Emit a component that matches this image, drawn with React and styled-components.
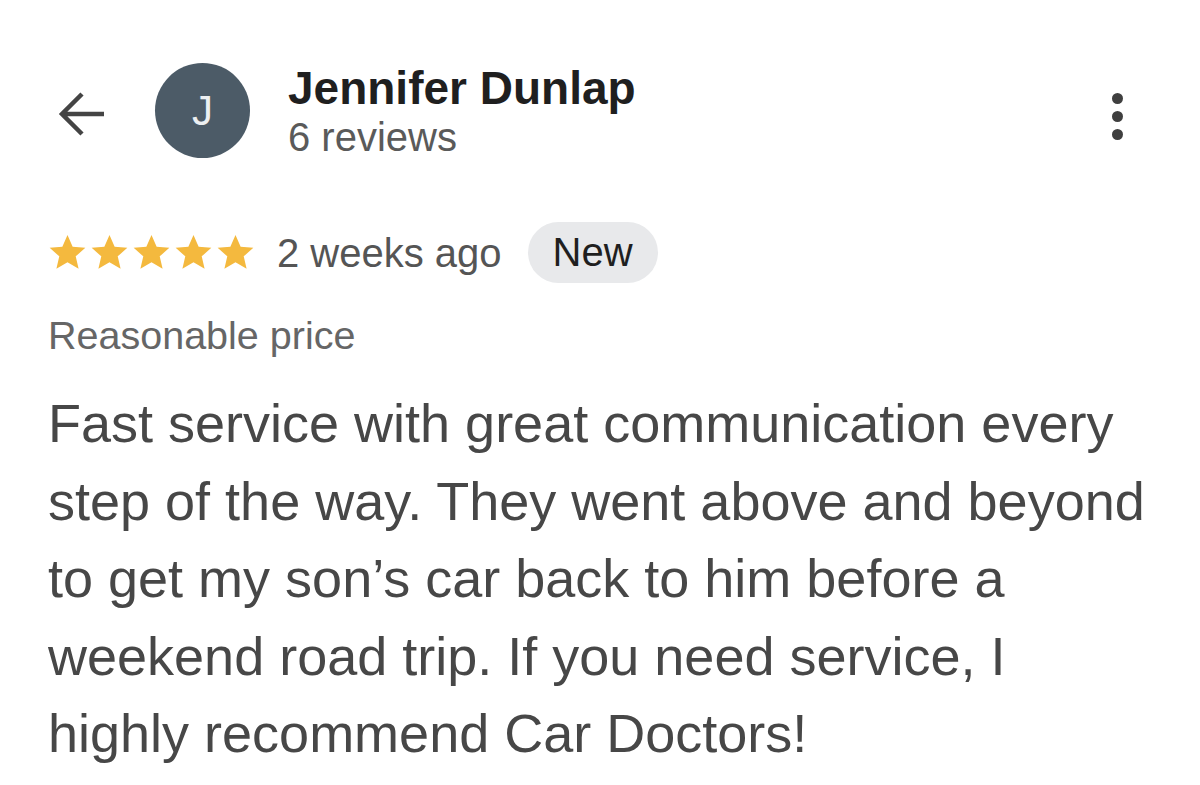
import React from 'react';
import styled, { createGlobalStyle } from 'styled-components';

const GlobalStyle = createGlobalStyle`
  html, body {
    margin: 0;
    padding: 0;
    background: #fff;
  }
  body {
    font-family: "Liberation Sans", Arial, Helvetica, sans-serif;
  }
`;

const Page = styled.div`
  width: 1200px;
  height: 785px;
  box-sizing: border-box;
  padding: 63px 0 0 48px;
  overflow: hidden;
  background: #fff;
`;

const Header = styled.div`
  display: flex;
  align-items: center;
  height: 95px;
  padding-right: 77px;
`;

const BackButton = styled.button`
  display: flex;
  align-items: center;
  justify-content: center;
  width: 60px;
  height: 60px;
  margin: 6px 43px 0 4px;
  padding: 0;
  border: none;
  background: none;
  color: #444;
`;

const Avatar = styled.div`
  width: 95px;
  height: 95px;
  flex-shrink: 0;
  border-radius: 50%;
  background: #4c5b67;
  color: #eceff1;
  display: flex;
  align-items: center;
  justify-content: center;
  font-size: 42px;
  margin-right: 38px;
`;

const Who = styled.div`
  display: flex;
  flex-direction: column;
  flex: 1;
`;

const Name = styled.div`
  font-size: 46px;
  line-height: 52px;
  font-weight: 700;
  color: #1f1f1f;
`;

const Sub = styled.div`
  font-size: 40px;
  line-height: 46px;
  color: #5a5a5a;
`;

const MoreButton = styled.button`
  display: flex;
  flex-direction: column;
  align-items: center;
  gap: 7px;
  padding: 0;
  border: none;
  background: none;
  margin-top: 12px;
`;

const Dot = styled.span`
  width: 11px;
  height: 11px;
  border-radius: 50%;
  background: #3f3f3f;
`;

const MetaRow = styled.div`
  display: flex;
  align-items: center;
  height: 61px;
  margin-top: 64px;
`;

const Stars = styled.div`
  display: flex;
  gap: 3px;
  margin-right: 22px;
`;

const Meta = styled.span`
  font-size: 40px;
  line-height: 40px;
  color: #555;
`;

const Pill = styled.span`
  margin-left: 26px;
  height: 61px;
  padding: 0 25px;
  border-radius: 31px;
  background: #e8e9eb;
  color: #1f1f1f;
  font-size: 40px;
  display: flex;
  align-items: center;
`;

const Tag = styled.div`
  margin-top: 29px;
  font-size: 39.5px;
  line-height: 46px;
  color: #666;
`;

const Body = styled.p`
  margin: 27px 0 0;
  width: 1110px;
  font-size: 54px;
  line-height: 77.5px;
  color: #474747;
`;

const Star = () => (
  <svg width="39" height="37" viewBox="0 0 24 23">
    <path
      d="M12 0.6l3.2 7.3 7.9 0.7-6 5.3 1.8 7.7L12 17.6l-6.9 4 1.8-7.7-6-5.3 7.9-0.7z"
      fill="#f4b93e"
    />
  </svg>
);

const App = () => {
  return (
    <>
      <GlobalStyle />
      <Page>
        <Header>
          <BackButton aria-label="Back">
            <svg width="48" height="46" viewBox="0 0 48 46" fill="none">
              <path
                d="M46 23H4M24 3L4 23l20 20"
                stroke="currentColor"
                strokeWidth="4.5"
                strokeLinejoin="miter"
              />
            </svg>
          </BackButton>
          <Avatar>J</Avatar>
          <Who>
            <Name>Jennifer Dunlap</Name>
            <Sub>6 reviews</Sub>
          </Who>
          <MoreButton aria-label="More">
            <Dot />
            <Dot />
            <Dot />
          </MoreButton>
        </Header>

        <MetaRow>
          <Stars>
            {[0, 1, 2, 3, 4].map((i) => (
              <Star key={i} />
            ))}
          </Stars>
          <Meta>2 weeks ago</Meta>
          <Pill>New</Pill>
        </MetaRow>

        <Tag>Reasonable price</Tag>

        <Body>
          Fast service with great communication every step of the way. They went above and beyond
          to get my son’s car back to him before a weekend road trip. If you need service, I highly
          recommend Car Doctors!
        </Body>
      </Page>
    </>
  );
};

export default App;
